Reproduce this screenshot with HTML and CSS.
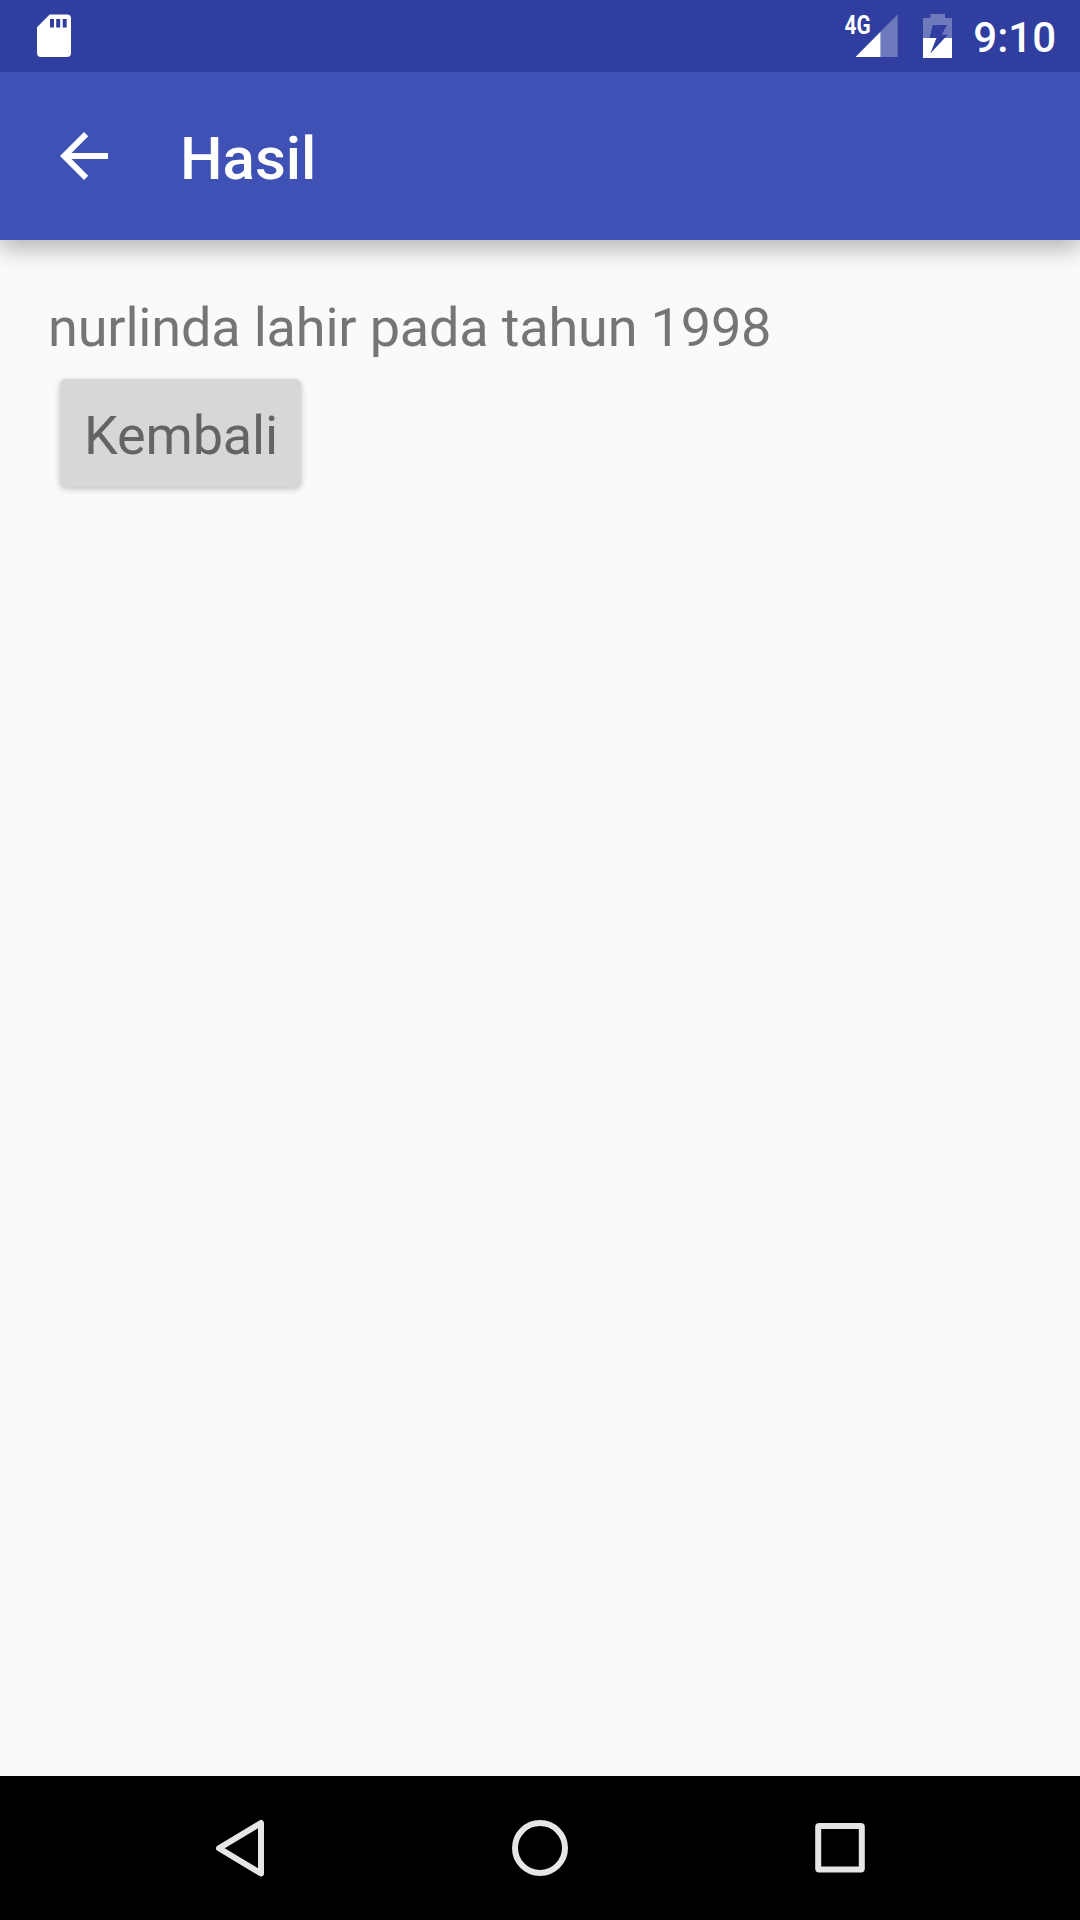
FILE: index.html
```html
<!DOCTYPE html>
<html lang="id">
<head>
<meta charset="utf-8">
<title>Hasil</title>
<link rel="stylesheet" href="styles.css">
</head>
<body>
<div class="screen">
  <div class="status-bar">
    <svg class="sd-icon" width="34" height="43" viewBox="0 0 34 43"><path fill="#fff" fill-rule="evenodd" d="M12.700 .5H30a4 4 0 0 1 4 4V39a4 4 0 0 1-4 4H4a4 4 0 0 1-4-4V13.200zM13 5v8.500h4V5zM19.200 5v8.500h4V5zM25.700 5v8.500h4V5z"/></svg>
    <div class="status-right">
      <div class="signal">
        <span class="network">4G</span>
        <svg width="43" height="43" viewBox="0 0 43 43"><path fill="#fff" fill-opacity=".3" d="M25.500 17.500 42.700 .5V43H25.500z"/><path fill="#fff" d="M.5 43l25-25.200V43z"/></svg>
      </div>
      <svg class="battery" width="29" height="44" viewBox="0 0 29 44"><path fill="#fff" fill-opacity=".3" d="M7.300 0H22v4h7v20h-7.300L25 20.700h-6.300L24 11H9.800L6.500 24H0V4h7.300z"/><path fill="#fff" d="M0 24h13.500L7.300 39.500 21.700 24H29v20H0z"/></svg>
      <span class="clock">9:10</span>
    </div>
  </div>
  <header class="app-bar">
    <svg width="72" height="72" viewBox="0 0 24 24"><path fill="#fff" d="M20 11H7.830l5.590-5.590L12 4l-8 8 8 8 1.410-1.410L7.830 13H20z"/></svg>
    <h1 class="title">Hasil</h1>
  </header>
  <main class="content">
    <p class="result">nurlinda lahir pada tahun 1998</p>
    <button class="button">Kembali</button>
  </main>
  <nav class="nav-bar">
    <svg width="300" height="144" viewBox="0 0 300 144"><path d="M171 47v50.500L129 72.300z" class="nav-shape"/></svg>
    <svg width="300" height="144" viewBox="0 0 300 144"><circle cx="150" cy="72" r="25" class="nav-shape"/></svg>
    <svg width="300" height="144" viewBox="0 0 300 144"><rect x="128.200" y="50" width="43.600" height="43.600" rx="1" class="nav-shape"/></svg>
  </nav>
</div>
</body>
</html>
```
FILE: styles.css
```css
* {
  box-sizing: border-box;
}

body {
  margin: 0;
  font-family: Roboto, "Liberation Sans", sans-serif;
}

.screen {
  display: flex;
  flex-direction: column;
  width: 1080px;
  height: 1920px;
  background: #fafafa;
}

.status-bar {
  display: flex;
  z-index: 1;
  justify-content: space-between;
  height: 72px;
  padding: 14px 24px 0 37px;
  background: #303f9f;
  color: #fff;
}

.status-right {
  display: flex;
}

.signal {
  display: flex;
  margin-right: 25px;
}

.network {
  width: 11px;
  font-size: 26px;
  font-weight: 700;
  line-height: 22px;
  white-space: nowrap;
  transform: translateX(.5px) scaleX(.8);
  transform-origin: left;
}

.clock {
  margin-left: 21px;
  font-size: 42px;
  font-weight: 500;
  line-height: 48px;
}

.app-bar {
  display: flex;
  align-items: flex-start;
  height: 168px;
  padding: 48px 0 0 48px;
  background: #3f51b5;
  color: #fff;
  box-shadow: 0 9px 22px rgba(0, 0, 0, .28);
}

.title {
  margin: 0 0 0 60px;
  font-size: 60px;
  font-weight: 500;
  line-height: 78px;
}

.content {
  display: flex;
  flex: 1;
  flex-direction: column;
  align-items: flex-start;
  padding: 48px;
}

.result {
  margin: 0;
  padding-top: 1px;
  font-size: 54px;
  letter-spacing: -.17px;
  line-height: 78px;
  color: #757575;
}

.button {
  height: 108px;
  margin: 12px;
  padding: 5px 23px 0 24px;
  border: 0;
  border-radius: 6px;
  background: #d6d7d7;
  box-shadow: 0 2px 6px rgba(0, 0, 0, .24);
  font: 400 54px Roboto, sans-serif;
  letter-spacing: -.17px;
  color: #636564;
}

.nav-bar {
  display: flex;
  justify-content: center;
  height: 144px;
  background: #000;
}

.nav-shape {
  fill: none;
  stroke: #e6e6e6;
  stroke-width: 6;
  stroke-linejoin: round;
}
```
